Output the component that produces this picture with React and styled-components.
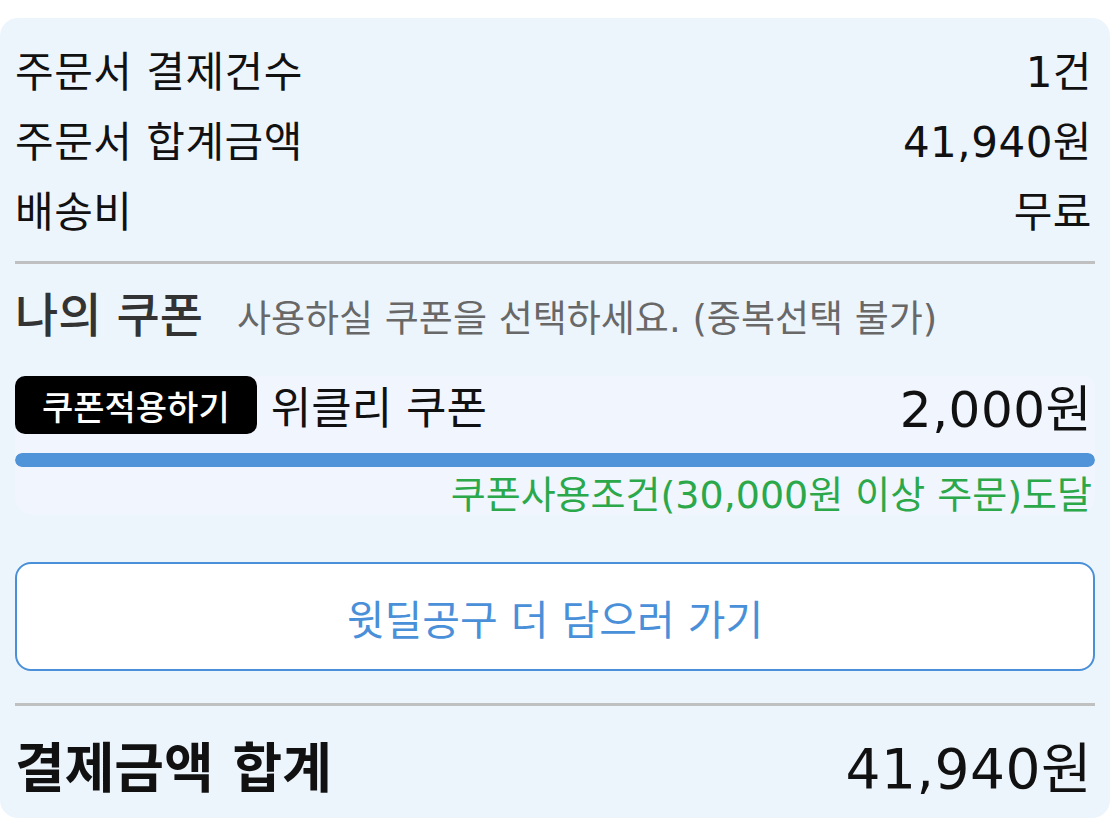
import React from 'react';
import { styled, createGlobalStyle } from 'styled-components';

const GlobalStyle = createGlobalStyle`
    html, body {
        margin: 0;
        padding: 0;
        background: #ffffff;
    }

    body {
        font-family: 'DejaVu Sans', 'Noto Sans CJK KR', sans-serif;
        color: #111;
    }
`;

const Page = styled.div`
    padding-top: 18px;
`;

const Card = styled.section`
    background: #edf5fc;
    border-radius: 18px;
    height: 800px;
    padding: 15px 15px 0;
    box-sizing: border-box;
    display: flex;
    flex-direction: column;
`;

const SummaryRow = styled.div`
    display: flex;
    justify-content: space-between;
    align-items: center;
    height: 70px;
    font-size: 42px;
    letter-spacing: 0.5px;
`;

const Value = styled.span`
    font-size: ${(p) => p.$size || 42}px;
    letter-spacing: 0.5px;
    margin-right: 3px;
`;

const Divider = styled.hr`
    border: none;
    height: 3px;
    background: #c0c0c0;
    margin: ${(p) => p.$margin};
    width: 100%;
`;

const CouponHeader = styled.div`
    display: flex;
    align-items: baseline;
    gap: 34px;
    height: 60px;
    line-height: 60px;
    margin-top: 22px;
`;

const CouponTitle = styled.h3`
    margin: 0;
    font-size: 47px;
    font-weight: 500;
    color: #333;
`;

const CouponHint = styled.span`
    font-size: 37px;
    color: #686868;
`;

const CouponBox = styled.div`
    margin-top: 30px;
    background: #f0f5fe;
    border-radius: 10px 10px 18px 18px;
`;

const CouponRow = styled.div`
    display: flex;
    align-items: center;
    height: 58px;
`;

const ApplyButton = styled.button`
    background: #000;
    color: #fff;
    border: none;
    border-radius: 10px;
    height: 58px;
    padding: 0 27px;
    font-family: inherit;
    font-size: 34px;
    font-weight: 500;
    cursor: pointer;
`;

const CouponName = styled.span`
    font-size: 44px;
    margin-left: 14px;
    flex: 1;
`;

const ProgressTrack = styled.div`
    margin-top: 19px;
    height: 14px;
    border-radius: 7px;
    background: #dfe8f3;
    overflow: hidden;
`;

const ProgressFill = styled.div`
    height: 100%;
    background: #4f93d8;
    border-radius: 7px;
`;

const Condition = styled.div`
    margin-top: 8px;
    height: 40px;
    line-height: 40px;
    text-align: right;
    font-size: 38px;
    color: #2ba84a;
    padding-right: 3px;
`;

const MoreButton = styled.button`
    margin-top: 47px;
    height: 109px;
    border: 2px solid #4a90d9;
    border-radius: 16px;
    background: #fff;
    color: #4a90d9;
    font-family: inherit;
    font-size: 41px;
    cursor: pointer;
`;

const TotalRow = styled.div`
    flex: 1;
    display: flex;
    justify-content: space-between;
    align-items: center;
    padding-top: 4px;
`;

const TotalLabel = styled.span`
    font-size: 54px;
    font-weight: 700;
`;

const summary = [
    { label: '주문서 결제건수', value: '1건' },
    { label: '주문서 합계금액', value: '41,940원' },
    { label: '배송비', value: '무료' },
];

export default function App() {
    return (
        <>
            <GlobalStyle />
            <Page>
                <Card>
                    {summary.map((row) => (
                        <SummaryRow key={row.label}>
                            <span>{row.label}</span>
                            <Value>{row.value}</Value>
                        </SummaryRow>
                    ))}
                    <Divider $margin="18px 0 0" />
                    <CouponHeader>
                        <CouponTitle>나의 쿠폰</CouponTitle>
                        <CouponHint>사용하실 쿠폰을 선택하세요. (중복선택 불가)</CouponHint>
                    </CouponHeader>
                    <CouponBox>
                        <CouponRow>
                            <ApplyButton>쿠폰적용하기</ApplyButton>
                            <CouponName>위클리 쿠폰</CouponName>
                            <Value $size={50}>2,000원</Value>
                        </CouponRow>
                        <ProgressTrack>
                            <ProgressFill style={{ width: `${Math.min(41940 / 30000, 1) * 100}%` }} />
                        </ProgressTrack>
                        <Condition>쿠폰사용조건(30,000원 이상 주문)도달</Condition>
                    </CouponBox>
                    <MoreButton>윗딜공구 더 담으러 가기</MoreButton>
                    <Divider $margin="32px 0 0" />
                    <TotalRow>
                        <TotalLabel>결제금액 합계</TotalLabel>
                        <Value $size={55}>41,940원</Value>
                    </TotalRow>
                </Card>
            </Page>
        </>
    );
}
